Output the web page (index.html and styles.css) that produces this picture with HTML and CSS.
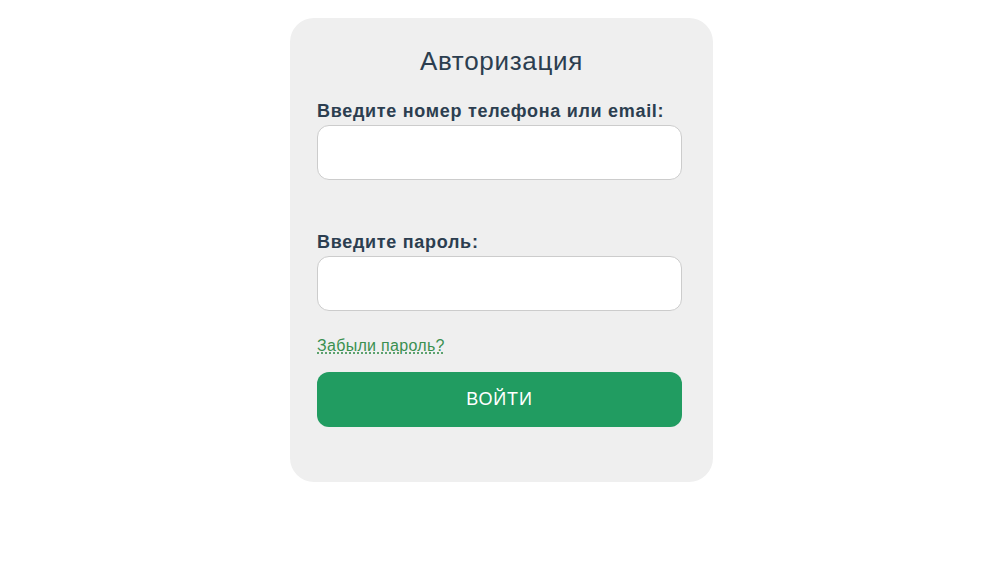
FILE: index.html
```html
<!DOCTYPE html>
<html lang="ru">
<head>
<meta charset="utf-8">
<title>Авторизация</title>
<link rel="stylesheet" href="styles.css">
</head>
<body>
<div class="page">
  <form class="card">
    <h1 class="title">Авторизация</h1>
    <label class="label" for="login">Введите номер телефона или email:</label>
    <input class="field" id="login" type="text">
    <label class="label label-pass" for="pass">Введите пароль:</label>
    <input class="field" id="pass" type="password">
    <a class="forgot" href="#">Забыли пароль?</a>
    <button class="submit" type="button">ВОЙТИ</button>
  </form>
</div>
</body>
</html>
```

FILE: styles.css
```css
html, body {
  margin: 0;
  padding: 0;
  background: #ffffff;
  font-family: "Liberation Sans", Arial, sans-serif;
}

.page {
  padding: 18px 0 0 290px;
}

.card {
  box-sizing: border-box;
  width: 423px;
  height: 464px;
  background: #efefef;
  border-radius: 24px;
  padding: 28px 31px 0 27px;
  display: flex;
  flex-direction: column;
  align-items: flex-start;
}

.title {
  align-self: stretch;
  margin: 0 0 25px;
  text-align: center;
  font-size: 26px;
  font-weight: normal;
  line-height: 30px;
  letter-spacing: 0.7px;
  color: #2c3e50;
  padding-left: 4px;
}

.label {
  font-size: 18px;
  font-weight: bold;
  line-height: 21px;
  letter-spacing: 0.7px;
  color: #2c3e50;
  margin-bottom: 3px;
}

.label-pass {
  margin-top: 52px;
}

.field {
  box-sizing: border-box;
  width: 365px;
  height: 55px;
  margin: 0;
  border: 1px solid #cccccc;
  border-radius: 12px;
  background: #ffffff;
  padding: 0 14px;
  font-size: 16px;
  font-family: inherit;
}

.forgot {
  margin-top: 25px;
  font-size: 16px;
  line-height: 19px;
  letter-spacing: 0.3px;
  color: #3a8f50;
  text-decoration: underline dotted;
  text-decoration-color: #3a8f50;
  text-underline-offset: 2px;
}

.submit {
  box-sizing: border-box;
  margin-top: 17px;
  width: 365px;
  height: 55px;
  border: none;
  border-radius: 12px;
  background: #219c61;
  color: #ffffff;
  font-family: inherit;
  font-size: 18px;
  letter-spacing: 0.8px;
  padding: 0;
  cursor: pointer;
}
```
